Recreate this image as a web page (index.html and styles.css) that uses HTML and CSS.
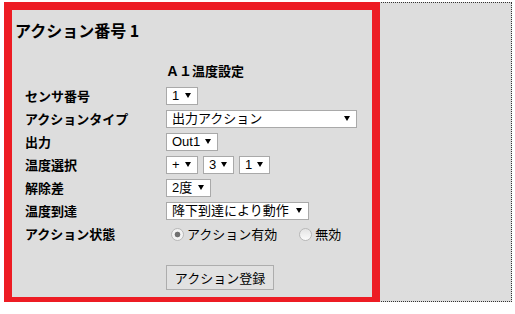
FILE: index.html
```html
<!DOCTYPE html>
<html lang="ja">
<head>
    <meta charset="UTF-8">
    <title>アクション設定</title>
    <link rel="stylesheet" href="styles.css">
</head>
<body>

<div class="stage">
    <div class="panel">
        <h2 class="panel-title">アクション番号 1</h2>

        <form class="action-form" onsubmit="return false;">
            <div class="form-head">Ａ１温度設定</div>

            <div class="form-grid">
                <label>センサ番号</label>
                <div class="ctrl">
                    <span class="sel"><select class="w-s"><option>1</option><option>2</option></select></span>
                </div>

                <label>アクションタイプ</label>
                <div class="ctrl">
                    <span class="sel"><select class="w-xl"><option>出力アクション</option></select></span>
                </div>

                <label>出力</label>
                <div class="ctrl">
                    <span class="sel"><select class="w-m"><option>Out1</option><option>Out2</option></select></span>
                </div>

                <label>温度選択</label>
                <div class="ctrl">
                    <span class="sel"><select class="w-s"><option>+</option><option>-</option></select></span>
                    <span class="sel"><select class="w-t"><option>3</option></select></span>
                    <span class="sel"><select class="w-t"><option>1</option></select></span>
                </div>

                <label>解除差</label>
                <div class="ctrl">
                    <span class="sel"><select class="w-d"><option>2度</option></select></span>
                </div>

                <label>温度到達</label>
                <div class="ctrl">
                    <span class="sel"><select class="w-l"><option>降下到達により動作</option></select></span>
                </div>

                <label>アクション状態</label>
                <div class="ctrl radios">
                    <label class="radio"><input type="radio" name="state" checked> アクション有効</label>
                    <label class="radio"><input type="radio" name="state"> 無効</label>
                </div>
            </div>

            <button class="submit">アクション登録</button>
        </form>
    </div>
</div>

</body>
</html>
```

FILE: styles.css
```css
body {
    margin: 0;
    background: #fff;
    color: #000;
    font-family: "Noto Sans CJK JP", sans-serif;
}

.stage {
    box-sizing: border-box;
    width: 508px;
    height: 300px;
    margin: 2px 0 0 4px;
    border: 1px dotted #333;
    background: #dddddd;
}

.panel {
    box-sizing: border-box;
    width: 376px;
    height: 303px;
    margin: -1px 0 0 -1px;
    padding-left: 3px;
    border: 8px solid #ed1c24;
    background: #dddddd;
}

.panel-title {
    margin: 10px 0 0;
    font-size: 16px;
    line-height: 20px;
    font-weight: bold;
}

.action-form {
    padding-left: 10px;
}

.form-head {
    margin: 22px 0 0 141px;
    font-size: 13px;
    line-height: 18px;
    font-weight: bold;
}

.form-grid {
    display: grid;
    grid-template-columns: 141px auto;
    grid-auto-rows: 18px;
    row-gap: 5px;
    margin-top: 7px;
    align-items: center;
}

.form-grid > label {
    font-size: 13px;
    line-height: 18px;
    font-weight: bold;
}

.ctrl {
    display: flex;
    align-items: center;
    gap: 5px;
    height: 18px;
}

/* select with the small black arrow */
.sel {
    position: relative;
    display: block;
    height: 18px;
}
.sel::after {
    content: "";
    position: absolute;
    right: 7px;
    top: 6px;
    border-left: 3px solid transparent;
    border-right: 3px solid transparent;
    border-top: 5px solid #000;
    pointer-events: none;
}
.sel select {
    -webkit-appearance: none;
    appearance: none;
    display: block;
    box-sizing: border-box;
    height: 18px;
    margin: 0;
    padding: 0 0 0 5px;
    border: 1px solid #a9a9a9;
    border-radius: 0;
    background: #fff;
    color: #000;
    font: 13px "Liberation Sans", "Noto Sans CJK JP", sans-serif;
    line-height: 16px;
    outline: none;
}

.w-s { width: 32px; }
.w-t { width: 31px; }
.w-m { width: 52px; }
.w-d { width: 45px; }
.w-l { width: 143px; }
.w-xl { width: 191px; }

.radios {
    gap: 0;
}
.radio {
    display: flex;
    align-items: center;
    gap: 3px;
    font-size: 13px;
    line-height: 18px;
    margin-left: 22px;
}
.radio:first-child {
    margin-left: 5px;
}
.radio input {
    -webkit-appearance: none;
    appearance: none;
    box-sizing: border-box;
    width: 13px;
    height: 13px;
    margin: 0;
    border: 1px solid #b8b8b8;
    border-radius: 50%;
    background: linear-gradient(#e4e4e4, #fbfbfb);
}
.radio input:checked {
    background: radial-gradient(circle, #707070 0, #707070 2.5px, #f2f2f2 3.2px);
}

.submit {
    display: block;
    box-sizing: border-box;
    width: 108px;
    height: 25px;
    margin: 22px 0 0 141px;
    padding: 0;
    border: 1px solid #adadad;
    border-radius: 0;
    background: #e1e1e1;
    color: #000;
    font: 13px "Noto Sans CJK JP", sans-serif;
    cursor: pointer;
}
```
